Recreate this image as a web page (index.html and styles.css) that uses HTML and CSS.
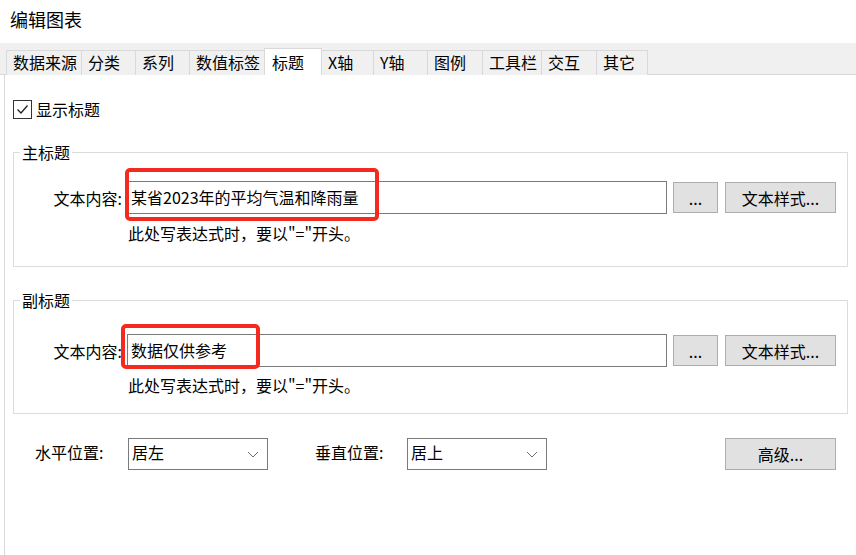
FILE: index.html
```html
<!DOCTYPE html>
<html lang="zh-CN">
<head>
<meta charset="utf-8">
<title>编辑图表</title>
<link rel="stylesheet" href="styles.css">
</head>
<body>
<div class="dialog">
  <div class="header">编辑图表</div>
  <div class="tabbar">
    <div class="tab w75">数据来源</div>
    <div class="tab w54">分类</div>
    <div class="tab w54">系列</div>
    <div class="tab w75">数值标签</div>
    <div class="tab active w57">标题</div>
    <div class="tab w52">X轴</div>
    <div class="tab w54">Y轴</div>
    <div class="tab w55">图例</div>
    <div class="tab w59">工具栏</div>
    <div class="tab w55">交互</div>
    <div class="tab w51">其它</div>
  </div>
  <div class="panel">
    <label class="check-row">
      <span class="checkbox">
        <svg width="17" height="17" viewBox="0 0 17 17"><path d="M3.5 8.5 L7 12 L13.5 4.5" fill="none" stroke="#222" stroke-width="1.3"/></svg>
      </span>
      <span class="check-label">显示标题</span>
    </label>

    <fieldset class="group g1">
      <legend>主标题</legend>
      <div class="field-row">
        <span class="field-label">文本内容:</span>
        <div class="text-input">某省2023年的平均气温和降雨量</div>
        <button class="btn btn-dots">...</button>
        <button class="btn btn-style">文本样式...</button>
        <div class="mark mark1"></div>
      </div>
      <div class="hint">此处写表达式时，要以"="开头。</div>
    </fieldset>

    <fieldset class="group g2">
      <legend>副标题</legend>
      <div class="field-row">
        <span class="field-label">文本内容:</span>
        <div class="text-input">数据仅供参考</div>
        <button class="btn btn-dots">...</button>
        <button class="btn btn-style">文本样式...</button>
        <div class="mark mark2"></div>
      </div>
      <div class="hint">此处写表达式时，要以"="开头。</div>
    </fieldset>

    <div class="pos-row">
      <span class="pos-label">水平位置:</span>
      <div class="select">
        <span>居左</span>
        <svg class="chev" width="12" height="7" viewBox="0 0 12 7"><path d="M1 1 L6 6 L11 1" fill="none" stroke="#6d6d6d" stroke-width="1"/></svg>
      </div>
      <span class="pos-label second">垂直位置:</span>
      <div class="select">
        <span>居上</span>
        <svg class="chev" width="12" height="7" viewBox="0 0 12 7"><path d="M1 1 L6 6 L11 1" fill="none" stroke="#6d6d6d" stroke-width="1"/></svg>
      </div>
      <button class="btn btn-adv">高级...</button>
    </div>
  </div>
</div>
</body>
</html>
```
FILE: styles.css
```css
* { box-sizing: border-box; }

html, body {
  margin: 0;
  padding: 0;
  background: #ffffff;
}

body {
  font-family: "Noto Sans CJK SC", "Noto Sans", sans-serif;
  font-size: 16px;
  color: #000;
  width: 856px;
  height: 555px;
  overflow: hidden;
}

.dialog {
  height: 555px;
  display: flex;
  flex-direction: column;
}

.header {
  height: 43px;
  padding: 5px 0 0 10px;
  font-size: 18px;
  line-height: 28px;
}

.tabbar {
  height: 32px;
  flex: none;
  background: #f0f0f0;
  border-bottom: 1px solid #d9d9d9;
  display: flex;
  align-items: flex-end;
  padding-left: 6px;
}

.tab {
  height: 25px;
  margin-bottom: -1px;
  border: 1px solid #d9d9d9;
  border-bottom: none;
  margin-left: -1px;
  background: #f0f0f0;
  padding-left: 6px;
  line-height: 23px;
  white-space: nowrap;
}
.tab:first-child { margin-left: 0; }
.tab.active {
  height: 27px;
  background: #ffffff;
  padding-left: 7px;
  line-height: 26px;
  position: relative;
}

.w51 { width: 52px; }
.w52 { width: 53px; }
.w54 { width: 55px; }
.w55 { width: 56px; }
.w57 { width: 58px; }
.w59 { width: 60px; }
.w75 { width: 76px; }

.panel {
  flex: 1;
  margin-left: 4px;
  border-left: 1px solid #d9d9d9;
  padding: 24px 8px 0 8px;
  display: flex;
  flex-direction: column;
}

.check-row {
  display: flex;
  align-items: center;
  height: 20px;
}
.checkbox {
  width: 19px;
  height: 19px;
  border: 1px solid #333;
  display: flex;
  align-items: center;
  justify-content: center;
  background: #fff;
}
.check-label {
  margin-left: 4px;
  line-height: 20px;
}

.group {
  margin: 23px 0 0 0;
  border: 1px solid #dcdcdc;
  padding: 0 10px 23px 0;
  min-width: 0;
}
.group legend {
  margin-left: 6px;
  padding: 0 2px;
  line-height: 20px;
  height: 20px;
}
.g1 .field-row { margin-top: 19px; }
.g1 .hint { margin-top: 9px; }
.g2 { padding-bottom: 18px; }
.g2 .field-row { margin-top: 24px; }
.g2 .hint { margin-top: 8px; }

.field-row {
  position: relative;
  display: flex;
  align-items: center;
  height: 33px;
}
.field-label {
  width: 108px;
  text-align: right;
  margin-right: 5px;
  white-space: nowrap;
}
.text-input {
  width: 540px;
  height: 33px;
  border: 1px solid #7a7a7a;
  padding-left: 3px;
  line-height: 30px;
  white-space: nowrap;
  background: #fff;
}

.btn {
  font-family: "Noto Sans CJK SC", "Noto Sans", sans-serif;
  font-size: 16px;
  color: #000;
  background: #e1e1e1;
  border: 1px solid #adadad;
  height: 31px;
  padding: 0;
  line-height: 28px;
  text-align: center;
}
.btn-dots { width: 45px; margin-left: 6px; }
.btn-style { width: 111px; margin-left: 7px; }

.hint {
  margin-left: 114px;
  line-height: 20px;
  height: 20px;
}

.mark {
  position: absolute;
  border: 4px solid #f42a1e;
  border-radius: 5px;
  pointer-events: none;
}
.mark1 { left: 111px; top: -13px; width: 254px; height: 53px; }
.mark2 { left: 107px; top: -10px; width: 139px; height: 45px; }

.pos-row {
  margin-top: 24px;
  display: flex;
  align-items: center;
  height: 32px;
  padding: 0 12px 0 22px;
}
.pos-label {
  width: 93px;
  white-space: nowrap;
  margin-top: -4px;
}
.pos-label.second {
  margin-left: 47px;
  width: 92px;
}
.select {
  width: 140px;
  height: 32px;
  border: 1px solid #7a7a7a;
  background: #fff;
  display: flex;
  align-items: center;
  justify-content: space-between;
  padding: 0 8px 0 3px;
  line-height: 28px;
}
.select span { margin-top: -4px; }
.chev { display: block; }
.btn-adv {
  width: 111px;
  height: 32px;
  margin-left: auto;
}
```
